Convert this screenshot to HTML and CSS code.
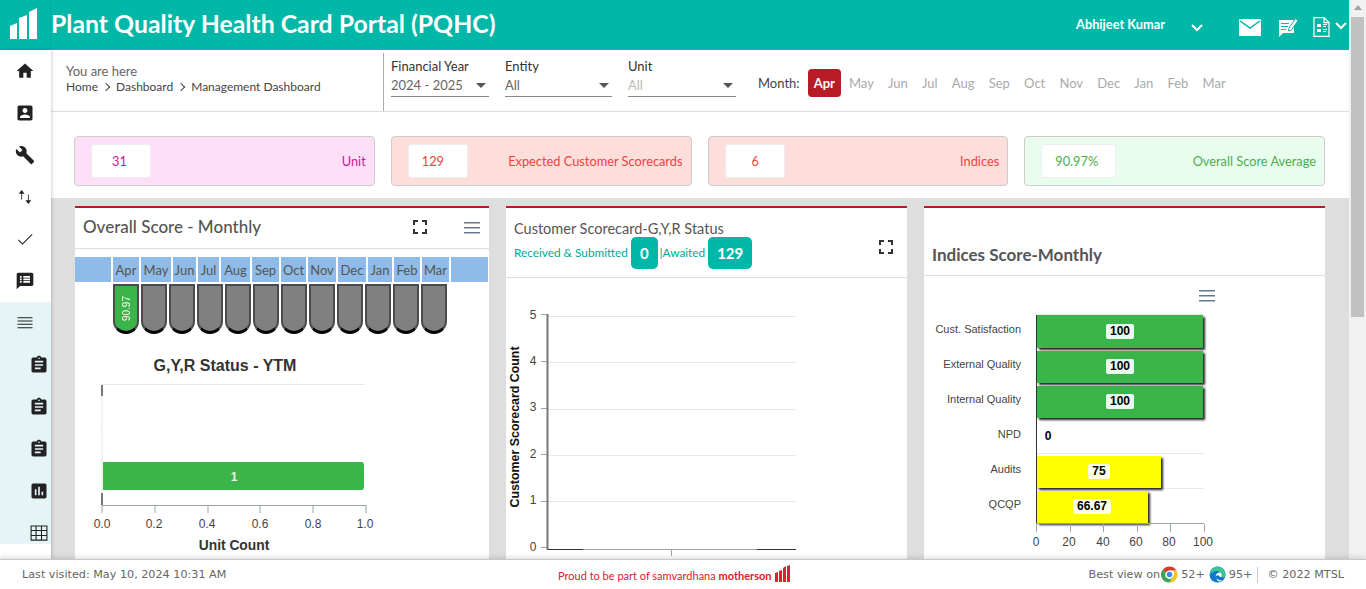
FILE: index.html
```html
<!DOCTYPE html>
<html lang="en">
<head>
    <meta charset="UTF-8">
    <meta name="viewport" content="width=device-width, initial-scale=1.0">
    <title>Plant Quality Health Card Portal (PQHC)</title>
    <link rel="stylesheet" href="styles.css">
</head>
<body>
    <svg class="defs" width="0" height="0">
        <symbol id="i-home" viewBox="0 0 24 24"><path d="M10 20v-6h4v6h5v-8h3L12 3 2 12h3v8z"/></symbol>
        <symbol id="i-contact" viewBox="0 0 24 24"><path d="M3 5v14c0 1.1.89 2 2 2h14c1.1 0 2-.9 2-2V5c0-1.1-.9-2-2-2H5c-1.11 0-2 .9-2 2zm12 4c0 1.66-1.34 3-3 3s-3-1.34-3-3 1.34-3 3-3 3 1.34 3 3zm-9 8c0-2 4-3.1 6-3.1s6 1.1 6 3.1v1H6v-1z"/></symbol>
        <symbol id="i-build" viewBox="0 0 24 24"><path d="M22.7 19l-9.1-9.1c.9-2.3.4-5-1.5-6.9-2-2-5-2.4-7.4-1.3L9 6 6 9 1.6 4.7C.4 7.1.9 10.1 2.9 12.1c1.9 1.9 4.6 2.4 6.9 1.5l9.1 9.1c.4.4 1 .4 1.4 0l2.3-2.3c.5-.4.5-1.1.1-1.4z"/></symbol>
        <symbol id="i-swap" viewBox="0 0 24 24"><path d="M8 3.500L4.500 8h3v7h1V8h3zM16 20.500l3.500-4.500h-3V9h-1v7h-3z"/></symbol>
        <symbol id="i-check" viewBox="0 0 24 24"><path d="M9 17.200L4.400 12.700l-.8.8L9 18.800 21 6.800l-.8-.8z"/></symbol>
        <symbol id="i-chat" viewBox="0 0 24 24"><path d="M20 2H4c-1.100 0-1.990.9-1.990 2L2 22l4-4h14c1.100 0 2-.9 2-2V4c0-1.100-.9-2-2-2zM6 6h2v2H6zm0 3h2v2H6zm0 3h2v2H6zm4-6h8v2h-8zm0 3h8v2h-8zm0 3h8v2h-8z"/></symbol>
        <symbol id="i-lines" viewBox="0 0 24 24"><path d="M3 5h18v1.200H3zm0 4h18v1.200H3zm0 4h18v1.200H3zm0 4h18v1.200H3z"/></symbol>
        <symbol id="i-clip" viewBox="0 0 24 24"><path d="M19 3h-4.180C14.400 1.840 13.300 1 12 1c-1.300 0-2.400.84-2.820 2H5c-1.100 0-2 .9-2 2v14c0 1.100.9 2 2 2h14c1.100 0 2-.9 2-2V5c0-1.100-.9-2-2-2zm-7 0c.55 0 1 .45 1 1s-.45 1-1 1-1-.45-1-1 .45-1 1-1zm2 14H7v-2h7v2zm3-4H7v-2h10v2zm0-4H7V7h10v2z"/></symbol>
        <symbol id="i-poll" viewBox="0 0 24 24"><path d="M19 3H5c-1.100 0-2 .9-2 2v14c0 1.100.9 2 2 2h14c1.100 0 2-.9 2-2V5c0-1.100-.9-2-2-2zM9 17H7v-7h2v7zm4 0h-2V7h2v10zm4 0h-2v-4h2v4z"/></symbol>
        <symbol id="i-grid" viewBox="0 0 24 24"><path fill="none" stroke="#222" stroke-width="1.300" d="M2.500 3.500h19v17h-19zM2.500 9h19M2.500 15h19M8.500 3.500v17M15 3.500v17"/></symbol>
        <symbol id="i-full" viewBox="0 0 14 14"><path d="M0 0h5v2H2v3H0zm9 0h5v5h-2V2H9zM0 9h2v3h3v2H0zm12 0h2v5H9v-2h3z"/></symbol>
        <symbol id="i-menu" viewBox="0 0 16 12"><path d="M0 0h16v1.600H0zm0 5h16v1.600H0zm0 5h16v1.600H0z"/></symbol>
    </svg>

    <div class="app">
        <div class="top">
            <div class="page">
                <header class="header">
                    <div class="logo">
                        <svg width="28" height="31" viewBox="0 0 28 31"><path fill="#fff" d="M0 18l7-3v16H0zM9 10l8-3v24H9zM19 4l8-4v31h-8z"/></svg>
                    </div>
                    <div class="title">Plant Quality Health Card Portal (PQHC)</div>
                    <div class="user">Abhijeet Kumar</div>
                    <svg class="chev chev-user" width="12" height="8" viewBox="0 0 12 8"><path d="M1 1l5 5 5-5" fill="none" stroke="#fff" stroke-width="2"/></svg>
                    <svg class="hicon hicon-mail" width="22" height="17" viewBox="0 0 22 17"><path fill="#fff" d="M1 0h20a1 1 0 0 1 1 1v15a1 1 0 0 1-1 1H1a1 1 0 0 1-1-1V1a1 1 0 0 1 1-1z"/><path d="M1 2l10 7 10-7" fill="none" stroke="#00b7a8" stroke-width="1.500"/></svg>
                    <svg class="hicon hicon-note" width="20" height="20" viewBox="0 0 20 20"><path fill="#fff" d="M1 3h15v13H5l-4 4z"/><path stroke="#00b7a8" stroke-width="1.200" fill="none" d="M3 6.500h8M3 9.500h7M3 12.500h5"/><path fill="#fff" stroke="#00b7a8" d="M11 11l6.500-9.500 2.500 2L13.500 13l-3 1z"/></svg>
                    <svg class="hicon hicon-form" width="17" height="20" viewBox="0 0 17 20"><path fill="none" stroke="#fff" stroke-width="1.200" d="M1 .6h10l5 5v13.800H1zM11 .6v5h5"/><path fill="#fff" d="M4 7h4v3H4zm6 0h4v1h-4zm0 2h3v1h-3zM4 12h4v3H4zm6 0h4v1h-4zm0 2h3v1h-3z"/></svg>
                    <svg class="chev chev-form" width="12" height="8" viewBox="0 0 12 8"><path d="M1 1l5 5 5-5" fill="none" stroke="#fff" stroke-width="2"/></svg>
                </header>

                <div class="body">
                    <nav class="sidebar">
                        <a class="nav-item"><svg><use href="#i-home"/></svg></a>
                        <a class="nav-item"><svg><use href="#i-contact"/></svg></a>
                        <a class="nav-item"><svg><use href="#i-build"/></svg></a>
                        <a class="nav-item"><svg><use href="#i-swap"/></svg></a>
                        <a class="nav-item"><svg><use href="#i-check"/></svg></a>
                        <a class="nav-item"><svg><use href="#i-chat"/></svg></a>
                        <div class="submenu">
                            <a class="nav-item"><svg><use href="#i-lines"/></svg></a>
                            <a class="nav-item sub"><svg><use href="#i-clip"/></svg></a>
                            <a class="nav-item sub"><svg><use href="#i-clip"/></svg></a>
                            <a class="nav-item sub"><svg><use href="#i-clip"/></svg></a>
                            <a class="nav-item sub"><svg><use href="#i-poll"/></svg></a>
                            <a class="nav-item sub"><svg><use href="#i-grid"/></svg></a>
                        </div>
                    </nav>

                    <main class="main">
                        <div class="toolbar">
                            <div class="crumbs">
                                <div class="here">You are here</div>
                                <div class="path">
                                    <span>Home</span><i class="sep"></i><span>Dashboard</span><i class="sep"></i><span>Management Dashboard</span>
                                </div>
                            </div>
                            <div class="filters">
                                <div class="filter fy">
                                    <label>Financial Year</label>
                                    <div class="select">2024 - 2025</div>
                                </div>
                                <div class="filter entity">
                                    <label>Entity</label>
                                    <div class="select">All</div>
                                </div>
                                <div class="filter unit">
                                    <label>Unit</label>
                                    <div class="select muted">All</div>
                                </div>
                            </div>
                            <div class="months">
                                <span class="months-label">Month:</span>
                                <span class="month active">Apr</span>
                                <span class="month">May</span>
                                <span class="month">Jun</span>
                                <span class="month">Jul</span>
                                <span class="month">Aug</span>
                                <span class="month">Sep</span>
                                <span class="month">Oct</span>
                                <span class="month">Nov</span>
                                <span class="month">Dec</span>
                                <span class="month">Jan</span>
                                <span class="month">Feb</span>
                                <span class="month">Mar</span>
                            </div>
                        </div>

                        <div class="stats">
                            <div class="stat pink"><div class="stat-value v-unit">31</div><div class="stat-label">Unit</div></div>
                            <div class="stat salmon"><div class="stat-value">129</div><div class="stat-label">Expected Customer Scorecards</div></div>
                            <div class="stat salmon"><div class="stat-value v-indices">6</div><div class="stat-label">Indices</div></div>
                            <div class="stat mint"><div class="stat-value wide">90.97%</div><div class="stat-label">Overall Score Average</div></div>
                        </div>

                        <div class="cards">
                            <section class="card card-left">
                                <div class="card-head head-left">
                                    <h2 class="card-title">Overall Score - Monthly</h2>
                                    <svg class="ic-full"><use href="#i-full"/></svg>
                                    <svg class="ic-menu"><use href="#i-menu"/></svg>
                                </div>
                                <div class="month-row">
                                    <span></span><span>Apr</span><span>May</span><span>Jun</span><span>Jul</span><span>Aug</span><span>Sep</span><span>Oct</span><span>Nov</span><span>Dec</span><span>Jan</span><span>Feb</span><span>Mar</span><span></span>
                                </div>
                                <div class="pills">
                                    <div class="pill green"><span>90.97</span></div>
                                    <div class="pill"></div><div class="pill"></div><div class="pill"></div>
                                    <div class="pill"></div><div class="pill"></div><div class="pill"></div>
                                    <div class="pill"></div><div class="pill"></div><div class="pill"></div>
                                    <div class="pill"></div><div class="pill"></div>
                                </div>
                                <svg class="chart chart-gyr" width="414" height="210" viewBox="75 350 414 210">
                                    <text class="ch-title" x="225" y="371" text-anchor="middle">G,Y,R Status - YTM</text>
                                    <path class="grid" d="M102 384.500H365"/>
                                    <path class="axis-light" d="M102 396V493"/>
                                    <path class="axis-dark" d="M102 385V396M102 493V505"/>
                                    <path class="axis-light" d="M101 427h2M101 459h2"/>
                                    <path class="bar-green" d="M103 462H361a3 3 0 0 1 3 3V487a3 3 0 0 1-3 3H103z"/>
                                    <text class="ch-val" x="234" y="481" text-anchor="middle">1</text>
                                    <path class="axis" d="M102 505.500H366M102 505V513M155 505V513M208 505V513M260 505V513M313 505V513M366 505V513"/>
                                    <g class="ch-label" text-anchor="middle">
                                        <text x="102" y="528">0.0</text><text x="154" y="528">0.2</text><text x="207" y="528">0.4</text>
                                        <text x="260" y="528">0.6</text><text x="313" y="528">0.8</text><text x="365" y="528">1.0</text>
                                    </g>
                                    <text class="ch-axis-title" x="234" y="550" text-anchor="middle">Unit Count</text>
                                </svg>
                            </section>

                            <section class="card card-mid">
                                <div class="card-head head-mid">
                                    <div>
                                        <div class="mid-title">Customer Scorecard-G,Y,R Status</div>
                                        <div class="mid-row">
                                            <span>Received &amp; Submitted</span><b class="badge">0</b><span>|Awaited</span><b class="badge">129</b>
                                        </div>
                                    </div>
                                    <svg class="ic-full mid-full"><use href="#i-full"/></svg>
                                </div>
                                <svg class="chart" width="401" height="290" viewBox="506 278 401 290">
                                    <path class="grid" d="M548 316.500H796M548 362.500H796M548 409.500H796M548 455.500H796M548 501.500H796"/>
                                    <path class="axis" d="M541 314.500H547M541 361.500H547M541 408.500H547M541 454.500H547M541 501.500H547M541 547.500H547M548 549.500H796M671.500 550V556"/>
                                    <path class="axis-dark" d="M547.500 314V550"/>
                                    <path class="axis-black" d="M548 549.500H583M757 549.500H796"/>
                                    <g class="ch-label" text-anchor="middle">
                                        <text x="533" y="319">5</text><text x="533" y="365">4</text><text x="533" y="411">3</text>
                                        <text x="533" y="458">2</text><text x="533" y="504">1</text><text x="533" y="551">0</text>
                                    </g>
                                    <text class="ch-side-title" transform="translate(519 427) rotate(-90)" text-anchor="middle">Customer Scorecard Count</text>
                                </svg>
                            </section>

                            <section class="card card-right">
                                <div class="card-head head-right">
                                    <h2 class="card-title strong">Indices Score-Monthly</h2>
                                </div>
                                <svg class="chart" width="401" height="290" viewBox="924 276 401 290">
                                    <use class="ch-menu" href="#i-menu" x="1199" y="290" width="16" height="12"/>
                                    <path class="grid" d="M1036 314.500H1204M1036 453.500H1204M1036 488.500H1204"/>
                                    <path class="axis-black" d="M1036.500 315V523"/>
                                    <g class="bars">
                                        <rect class="bar-green" x="1037" y="315" width="166" height="33"/>
                                        <rect class="bar-green" x="1037" y="351" width="166" height="32"/>
                                        <rect class="bar-green" x="1037" y="386" width="166" height="32"/>
                                        <rect class="bar-yellow" x="1037" y="456" width="124" height="32"/>
                                        <rect class="bar-yellow" x="1037" y="491" width="111" height="32"/>
                                    </g>
                                    <g class="ch-cat" text-anchor="end">
                                        <text x="1021" y="333">Cust. Satisfaction</text>
                                        <text x="1021" y="368">External Quality</text>
                                        <text x="1021" y="403">Internal Quality</text>
                                        <text x="1021" y="438">NPD</text>
                                        <text x="1021" y="473">Audits</text>
                                        <text x="1021" y="508">QCQP</text>
                                    </g>
                                    <g class="val-box">
                                        <rect x="1106" y="324" width="28" height="15" rx="2"/>
                                        <rect x="1106" y="359" width="28" height="15" rx="2"/>
                                        <rect x="1106" y="394" width="28" height="15" rx="2"/>
                                        <rect x="1088" y="464" width="22" height="15" rx="2"/>
                                        <rect x="1073" y="499" width="38" height="15" rx="2"/>
                                    </g>
                                    <g class="val-text" text-anchor="middle">
                                        <text x="1120" y="335">100</text>
                                        <text x="1120" y="370">100</text>
                                        <text x="1120" y="405">100</text>
                                        <text x="1048" y="440">0</text>
                                        <text x="1099" y="475">75</text>
                                        <text x="1092" y="510">66.67</text>
                                    </g>
                                    <path class="axis" d="M1036 523.500H1204M1036.500 524V532M1070.500 524V532M1103.500 524V532M1137.500 524V532M1170.500 524V532M1204.500 524V532"/>
                                    <g class="ch-label" text-anchor="middle">
                                        <text x="1036" y="546">0</text><text x="1069" y="546">20</text><text x="1103" y="546">40</text>
                                        <text x="1136" y="546">60</text><text x="1169" y="546">80</text><text x="1203" y="546">100</text>
                                    </g>
                                </svg>
                            </section>
                        </div>
                    </main>
                </div>
            </div>
            <div class="scrollbar"><div class="scroll-up"></div><div class="scroll-thumb"></div></div>
        </div>

        <footer class="footer">
            <div class="visited">Last visited: May 10, 2024 10:31 AM</div>
            <div class="proud">
                <span>Proud to be part of samvardhana <b>motherson</b></span>
                <svg width="15" height="17" viewBox="0 0 15 17"><path fill="#e0202c" d="M0 8l3-1v10H0zM4 6l3-1v12H4zM8 3l3-2v16H8zM12 1l3-1v17h-3z"/></svg>
            </div>
            <div class="best">
                <span>Best view on</span>
                <svg class="browser" width="17" height="17" viewBox="0 0 34 34">
                    <path fill="#db3a30" d="M17 1a16 16 0 0 1 13.900 8H17a8 8 0 0 0-7.500 5L4 6.500A16 16 0 0 1 17 1z"/>
                    <path fill="#f5c518" d="M30.900 9A16 16 0 0 1 17 33l7-12a8 8 0 0 0-1-12z"/>
                    <path fill="#3aa655" d="M4 6.500A16 16 0 0 0 17 33l7-12a8 8 0 0 1-14.500-7z"/>
                    <circle cx="17" cy="17" r="7.500" fill="#fff"/><circle cx="17" cy="17" r="5.500" fill="#4285f4"/>
                </svg>
                <span class="ver">52+</span>
                <svg class="browser edge" width="17" height="17" viewBox="0 0 34 34">
                    <circle cx="17" cy="17" r="16" fill="#0f78c9"/>
                    <path fill="#3cc694" d="M17 1a16 16 0 0 1 16 17c0 5-5 6-8 4 1-8-4-13-12-12-4 .5-8 3-11 8A16 16 0 0 1 17 1z"/>
                    <path fill="#fff" d="M13 22c0-5 4-9 8-9s5 3 4 9c-3 1-4-2-6-3-3-1-5 1-6 3z"/>
                    <path fill="#fff" d="M15 24c1 3 6 5 11 4l-3 3c-5 1-8-3-8-7z" opacity=".9"/>
                </svg>
                <span class="ver">95+</span>
                <span class="copy">© 2022 MTSL</span>
            </div>
        </footer>
    </div>
</body>
</html>
```

FILE: styles.css
```css
* {
    box-sizing: border-box;
}
body {
    margin: 0;
    font-family: "Lato", "Liberation Sans", sans-serif;
    color: #555;
    overflow: hidden;
}
.defs {
    display: block;
}
.app {
    display: flex;
    flex-direction: column;
    height: 589px;
}
.top {
    display: flex;
    height: 559px;
}
.page {
    flex: 1;
    min-width: 0;
    display: flex;
    flex-direction: column;
}

/* header */
.header {
    height: 50px;
    flex: none;
    background: #00b7a8;
    display: flex;
    align-items: center;
    color: #fff;
}
.logo {
    width: 51px;
    height: 50px;
    padding: 8px 0 0 10px;
    border-right: 1px solid rgba(0, 0, 0, .04);
}
.logo svg {
    display: block;
}
.title {
    font-size: 24.800px;
    font-weight: 700;
    margin-bottom: 4px;
    white-space: nowrap;
}
.user {
    margin-left: auto;
    font-size: 12.800px;
    font-weight: 700;
    margin-bottom: 2px;
}
.chev-user {
    margin-left: 26px;
    margin-top: 5px;
}
.hicon-mail {
    margin-left: 36px;
    margin-top: 4px;
}
.hicon-note {
    margin-left: 17px;
    margin-top: 3px;
}
.hicon-form {
    margin-left: 15px;
    margin-top: 3px;
}
.chev-form {
    margin-left: 5px;
    margin-right: 2px;
    margin-top: 2px;
}

/* sidebar */
.body {
    flex: 1;
    min-height: 0;
    display: flex;
}
.sidebar {
    width: 51px;
    flex: none;
    background: #fff;
    box-shadow: 1px 0 3px rgba(0, 0, 0, .18);
    position: relative;
}
.nav-item {
    display: flex;
    height: 42px;
    align-items: center;
    justify-content: center;
    padding-right: 1px;
}
.nav-item svg {
    width: 20px;
    height: 20px;
    fill: #222;
}
.nav-item.sub {
    padding-left: 27px;
}
.submenu {
    height: 242px;
    background: #e5f5f6;
}

/* toolbar */
.main {
    flex: 1;
    min-width: 0;
    background: #dedede;
    overflow: hidden;
}
.toolbar {
    height: 62px;
    background: #fff;
    border-bottom: 1px solid #ddd;
    display: flex;
}
.crumbs {
    width: 333px;
    padding: 10px 0 0 15px;
    border-right: 1px solid #aaa;
    margin-top: 3px;
}
.here {
    font-size: 13px;
    color: #666;
    line-height: 16px;
}
.path {
    display: flex;
    align-items: center;
    font-size: 12px;
    color: #444;
    margin-top: 0;
}
.sep {
    width: 6px;
    height: 6px;
    border-top: 1.500px solid #444;
    border-right: 1.500px solid #444;
    transform: rotate(45deg);
    margin: 0 7px 0 5px;
}
.filters {
    display: flex;
    padding: 8px 0 0 7px;
    gap: 16px;
}
.filter label {
    display: block;
    font-size: 13px;
    color: #333;
    line-height: 16px;
}
.fy {
    width: 98px;
}
.entity {
    width: 107px;
}
.unit {
    width: 108px;
}
.select {
    position: relative;
    height: 23px;
    padding-top: 3px;
    font-size: 13px;
    color: #666;
    border-bottom: 1px solid #888;
}
.select::after {
    content: "";
    position: absolute;
    right: 3px;
    top: 9px;
    border-left: 5px solid transparent;
    border-right: 5px solid transparent;
    border-top: 5px solid #555;
}
.select.muted {
    color: #bbb;
}
.months {
    display: flex;
    align-items: center;
    font-size: 13px;
    padding: 8px 0 3px 22px;
    gap: 14.200px;
}
.months-label {
    color: #444;
    margin-right: -6px;
}
.month {
    color: #aaa;
}
.month.active {
    background: #b71c26;
    color: #fff;
    font-weight: 700;
    width: 33px;
    height: 28px;
    border-radius: 4px;
    display: flex;
    align-items: center;
    justify-content: center;
    margin-right: -6px;
}

/* stat boxes */
.stats {
    height: 86px;
    background: #fff;
    display: flex;
    gap: 16px;
    padding: 24px 24px 0 23px;
}
.stat {
    flex: 1;
    height: 50px;
    border: 1px solid #ccc;
    border-radius: 4px;
    display: flex;
    align-items: center;
    justify-content: space-between;
    padding: 0 8px 0 16px;
    font-size: 12.800px;
}
.stat-value {
    width: 60px;
    height: 34px;
    background: #fff;
    border: 1px solid #eee;
    border-radius: 3px;
    display: flex;
    align-items: center;
    padding-left: 13px;
}
.stat-value.v-unit {
    padding-left: 20px;
}
.stat-value.v-indices {
    padding-left: 26px;
}
.stat-value.wide {
    width: 75px;
}
.pink {
    background: #fddff7;
    color: #c9189b;
}
.salmon {
    background: #fddeda;
    color: #f0433c;
}
.mint {
    background: #e9fdee;
    color: #4cae4f;
}

/* cards */
.cards {
    display: flex;
    gap: 17px;
    padding: 8px 24px 0;
}
.card {
    flex: none;
    height: 400px;
    background: #fff;
    border-top: 2px solid #b71c26;
}
.card-left {
    width: 414px;
}
.card-mid,
.card-right {
    width: 401px;
}
.card-head {
    border-bottom: 1px solid #ddd;
    display: flex;
}
.head-left {
    height: 41px;
    padding: 0 9px 3px 8px;
    align-items: center;
}
.card-title {
    margin: 0;
    font-size: 17px;
    font-weight: 500;
    color: #555;
    flex: 1;
}
.card-title.strong {
    font-weight: 700;
}
.ic-full {
    width: 14px;
    height: 14px;
    fill: #333;
}
.ic-menu {
    width: 16px;
    height: 12px;
    fill: #667a8c;
    margin-left: 37px;
    margin-top: 3px;
}
.month-row {
    display: grid;
    grid-template-columns: 36px 26px 30px 23px 21px 29px 27px 25px 28px 28px 24px 26px 27px 37px;
    column-gap: 2px;
    margin-top: 8px;
}
.month-row span {
    height: 25px;
    background: #8ebbe8;
    font-size: 13px;
    color: #555;
    display: flex;
    align-items: center;
    justify-content: center;
}
.pills {
    display: flex;
    gap: 2px;
    padding: 2px 0 0 38px;
}
.pill {
    width: 26px;
    height: 50px;
    background: #808080;
    border: 2px solid #4b4b4b;
    border-bottom: 3px solid #000;
    border-radius: 0 0 13px 13px;
    display: flex;
    align-items: center;
    justify-content: center;
}
.pill.green {
    background: #3bb54a;
}
.pill span {
    writing-mode: vertical-rl;
    transform: rotate(180deg);
    font: 10px "Liberation Sans", sans-serif;
    color: #fff;
}

/* chart parts */
.chart {
    display: block;
    font-family: "Liberation Sans", Arial, sans-serif;
}
.chart-gyr {
    margin-top: 16px;
}
.ch-title {
    font-size: 16px;
    font-weight: 700;
    fill: #333;
}
.ch-val {
    font-size: 12px;
    font-weight: 700;
    fill: #eee;
}
.ch-label text {
    font-size: 12px;
    fill: #444;
}
.ch-axis-title {
    font-size: 13.800px;
    font-weight: 700;
    fill: #333;
}
.ch-side-title {
    font-size: 12.400px;
    font-weight: 700;
    fill: #111;
}
.grid,
.axis-light {
    stroke: #e8e8e8;
    fill: none;
}
.axis {
    stroke: #9aa3a8;
    fill: none;
}
.axis-dark {
    stroke: #777;
    stroke-width: 2;
    fill: none;
}
.axis-black {
    stroke: #333;
    fill: none;
}
.bar-green {
    fill: #39b54a;
}
.bar-yellow {
    fill: #ffff00;
}
.bars rect {
    filter: drop-shadow(2px 2px 1px #222);
}
.ch-cat text {
    font-size: 11px;
    fill: #444;
}
.ch-menu {
    fill: #667a8c;
}
.val-box rect {
    fill: #fff;
    fill-opacity: .9;
}
.val-text text {
    font-size: 12px;
    font-weight: 700;
    fill: #000;
}

/* middle card head */
.head-mid {
    height: 70px;
    padding: 13px 14px 0 8px;
    justify-content: space-between;
}
.mid-title {
    font-size: 14.500px;
    color: #555;
    line-height: 16px;
}
.mid-row {
    display: flex;
    align-items: center;
    font-size: 11.800px;
    color: #00a89a;
}
.mid-row span {
    margin-bottom: 2px;
}
.badge {
    height: 32px;
    min-width: 26px;
    padding: 0 9px;
    background: #00b7a8;
    color: #fff;
    border-radius: 5px;
    font-size: 15px;
    display: flex;
    align-items: center;
    justify-content: center;
    margin: 0 2px 0 3px;
}
.mid-full {
    margin-top: 19px;
}
.head-right {
    height: 68px;
    padding: 0 8px 10px;
    align-items: flex-end;
}

/* scrollbar */
.scrollbar {
    width: 17px;
    flex: none;
    background: #f1f1f1;
    padding: 0 2px;
}
.scroll-up {
    height: 17px;
    padding-top: 5px;
}
.scroll-up::before {
    content: "";
    display: block;
    width: 0;
    margin: 0 auto;
    border-left: 4px solid transparent;
    border-right: 4px solid transparent;
    border-bottom: 5px solid #a3a3a3;
}
.scroll-thumb {
    height: 300px;
    background: #c1c1c1;
}

/* footer */
.footer {
    height: 30px;
    flex: none;
    background: #fff;
    border-top: 1px solid #c8c8c8;
    box-shadow: 0 -2px 5px rgba(0, 0, 0, .12);
    position: relative;
    display: grid;
    grid-template-columns: 536px auto 1fr;
    padding: 0 22px;
    align-items: center;
}
.visited {
    font: 11.200px "DejaVu Sans", sans-serif;
    color: #666;
}
.proud {
    font-size: 11px;
    color: #e0202c;
    display: flex;
    align-items: center;
    gap: 3px;
    padding-top: 2px;
}
.proud svg {
    margin-bottom: 5px;
}
.best {
    display: flex;
    align-items: center;
    justify-content: flex-end;
    font: 11.200px "DejaVu Sans", sans-serif;
    color: #666;
}
.browser {
    margin-left: 1px;
}
.ver {
    margin-left: 3px;
}
.edge {
    margin-left: 4px;
}
.copy {
    margin-left: 5px;
    padding-left: 9px;
    border-left: 1px solid #ccc;
    line-height: 16px;
}
```
